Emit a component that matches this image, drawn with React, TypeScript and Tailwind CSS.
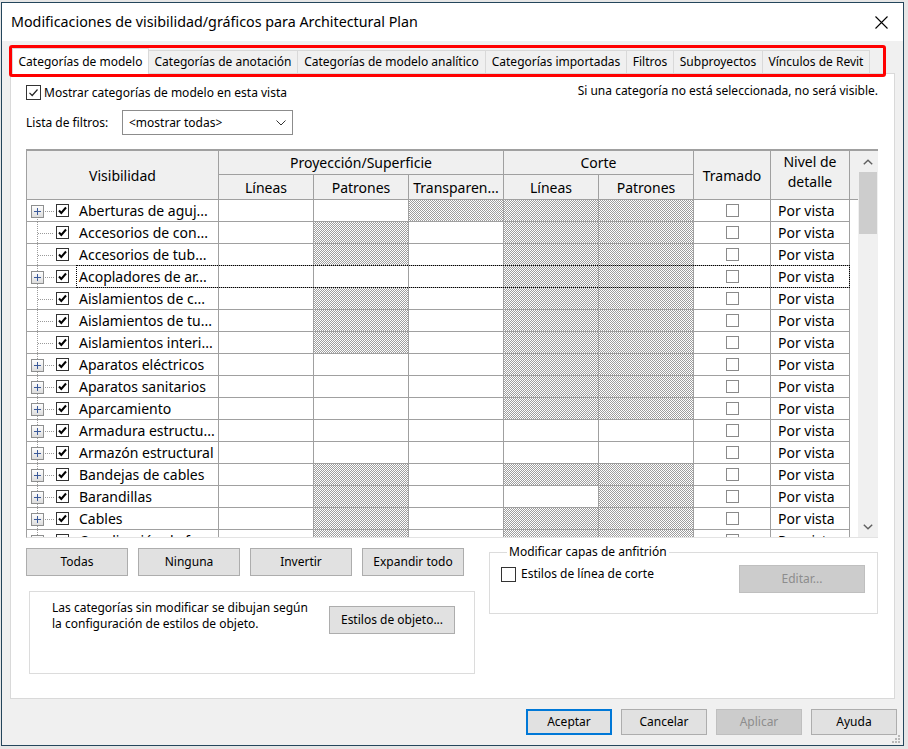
import React from "react";

const F = "font-['Noto_Sans',sans-serif]";
const HATCH =
  "bg-[repeating-conic-gradient(#9e9e9e_0%_25%,#ffffff_0%_50%)] bg-[length:2px_2px]";

type Row = {
  name: string;
  exp: boolean;
  p1: boolean;
  t: boolean;
  l2: boolean;
  p2: boolean;
  focus?: boolean;
};

const rows: Row[] = [
  { name: "Aberturas de aguj...", exp: true, p1: false, t: true, l2: true, p2: true },
  { name: "Accesorios de con...", exp: false, p1: true, t: false, l2: true, p2: true },
  { name: "Accesorios de tub...", exp: false, p1: true, t: false, l2: true, p2: true },
  { name: "Acopladores de ar...", exp: true, p1: false, t: false, l2: true, p2: true, focus: true },
  { name: "Aislamientos de c...", exp: false, p1: true, t: false, l2: true, p2: true },
  { name: "Aislamientos de tu...", exp: false, p1: true, t: false, l2: true, p2: true },
  { name: "Aislamientos interi...", exp: false, p1: true, t: false, l2: true, p2: true },
  { name: "Aparatos eléctricos", exp: true, p1: false, t: false, l2: true, p2: true },
  { name: "Aparatos sanitarios", exp: true, p1: false, t: false, l2: true, p2: true },
  { name: "Aparcamiento", exp: true, p1: false, t: false, l2: true, p2: true },
  { name: "Armadura estructu...", exp: true, p1: false, t: false, l2: false, p2: false },
  { name: "Armazón estructural", exp: true, p1: false, t: false, l2: false, p2: false },
  { name: "Bandejas de cables", exp: true, p1: true, t: false, l2: true, p2: true },
  { name: "Barandillas", exp: true, p1: true, t: false, l2: false, p2: true },
  { name: "Cables", exp: true, p1: true, t: false, l2: true, p2: true },
  { name: "Canalización de f...", exp: true, p1: true, t: false, l2: true, p2: true },
];

function TreeGlyph({ exp, first }: { exp: boolean; first: boolean }) {
  return (
    <svg width="29" height="22" viewBox="0 0 29 22" className="shrink-0">
      <defs>
        <linearGradient id="expg" x1="0" y1="0" x2="0" y2="1">
          <stop offset="0" stopColor="#ffffff" />
          <stop offset="1" stopColor="#dcdcdc" />
        </linearGradient>
      </defs>
      <line
        x1="10.5"
        y1={first ? 11 : 0}
        x2="10.5"
        y2="22"
        stroke="#9a9a9a"
        strokeDasharray="1 1"
      />
      <line x1={exp ? 16 : 11} y1="11.5" x2="27" y2="11.5" stroke="#9a9a9a" strokeDasharray="1 1" />
      {exp && (
        <g>
          <rect x="4.5" y="5.5" width="12" height="12" fill="url(#expg)" stroke="#8e8f8f" />
          <line x1="7" y1="11.5" x2="14" y2="11.5" stroke="#3b5a9a" strokeWidth="1" />
          <line x1="10.5" y1="8" x2="10.5" y2="15" stroke="#3b5a9a" strokeWidth="1" />
        </g>
      )}
    </svg>
  );
}

function BoldCheck() {
  return (
    <div className="w-[13px] h-[13px] border border-[#333] bg-white shrink-0 flex items-center justify-center">
      <svg width="11" height="11" viewBox="0 0 11 11">
        <path d="M2 5.5 L4.3 8 L9 2.5" fill="none" stroke="#000" strokeWidth="2" />
      </svg>
    </div>
  );
}

function Cell({ w, hatch, children, cls = "" }: { w: string; hatch?: boolean; children?: React.ReactNode; cls?: string }) {
  return (
    <div className={`${w} h-full shrink-0 border-r border-b border-[#a0a0a0] ${hatch ? HATCH : "bg-white"} ${cls}`}>
      {children}
    </div>
  );
}

function DataRow({ r, i }: { r: Row; i: number }) {
  return (
    <div className="relative flex h-[22px] text-[14px] text-black">
      <Cell w="w-[192px]" cls="flex items-center">
        <TreeGlyph exp={r.exp} first={i === 0} />
        <BoldCheck />
        <span className="ml-[10px] whitespace-nowrap leading-none">{r.name}</span>
      </Cell>
      <Cell w="w-[95px]" />
      <Cell w="w-[95px]" hatch={r.p1} />
      <Cell w="w-[95px]" hatch={r.t} />
      <Cell w="w-[95px]" hatch={r.l2} />
      <Cell w="w-[95px]" hatch={r.p2} />
      <Cell w="w-[77px]" cls="flex items-center justify-center">
        <div className="w-[13px] h-[13px] border border-[#8a8a8a] bg-white" />
      </Cell>
      <Cell w="w-[79px]" cls="flex items-center pl-[7px]">
        <span className="whitespace-nowrap leading-none">Por vista</span>
      </Cell>
      <div className="flex-1 bg-white" />
      {r.focus && (
        <div className="absolute top-[-1px] left-[49px] w-[774px] h-[23px] border border-dotted border-black pointer-events-none" />
      )}
    </div>
  );
}

function Btn({ children, w, cls = "" }: { children: React.ReactNode; w: string; cls?: string }) {
  return (
    <div
      className={`${w} h-[28px] bg-[#e1e1e1] border border-[#adadad] flex items-center justify-center text-[12px] text-black shrink-0 ${cls}`}
    >
      {children}
    </div>
  );
}

const tabs = [
  { t: "Categorías de modelo", w: "w-[137px]" },
  { t: "Categorías de anotación", w: "w-[149px]" },
  { t: "Categorías de modelo analítico", w: "w-[188px]" },
  { t: "Categorías importadas", w: "w-[141px]" },
  { t: "Filtros", w: "w-[47px]" },
  { t: "Subproyectos", w: "w-[89px]" },
  { t: "Vínculos de Revit", w: "w-[107px]" },
];

export default function App() {
  return (
    <div className={`${F} w-[908px] h-[749px] bg-[#e6e6e6] overflow-hidden pl-[1px] pt-[2px]`}>
      <div className="relative w-[903px] h-[744px] border border-[#24465c] bg-[#f0f0f0] flex flex-col">
        {/* title bar */}
        <div className="h-[38px] bg-white flex items-center justify-between pl-[9px] pr-[15px] shrink-0">
          <span className="text-[14.3px] text-black whitespace-nowrap">
            Modificaciones de visibilidad/gráficos para Architectural Plan
          </span>
          <svg width="13" height="13" viewBox="0 0 13 13">
            <path d="M0.5 0.5L12.5 12.5M12.5 0.5L0.5 12.5" stroke="#000" strokeWidth="1.1" />
          </svg>
        </div>

        {/* body */}
        <div className="flex flex-col px-[8px] pt-[7px]">
          {/* tabs */}
          <div className="flex items-end h-[25px] pl-[2px] relative z-10">
            {tabs.map((tb, i) =>
              i === 0 ? (
                <div
                  key={tb.t}
                  className={`${tb.w} h-[26px] mb-[-1px] bg-white border-l border-t border-r border-[#d9d9d9] flex items-center justify-center text-[12px] text-black whitespace-nowrap`}
                >
                  {tb.t}
                </div>
              ) : (
                <div
                  key={tb.t}
                  className={`${tb.w} h-[23px] bg-[#f0f0f0] border-t border-r border-[#d9d9d9] flex items-center justify-center text-[12px] text-black whitespace-nowrap`}
                >
                  {tb.t}
                </div>
              )
            )}
          </div>

          {/* panel */}
          <div className="h-[626px] bg-white border border-[#d9d9d9] pl-[15px] pr-[16px] flex flex-col">
            {/* checkbox row */}
            <div className="mt-[11px] h-[15px] flex items-center justify-between text-[12px] text-black">
              <div className="flex items-center">
                <div className="w-[15px] h-[15px] border border-[#333] bg-white flex items-center justify-center">
                  <svg width="13" height="13" viewBox="0 0 13 13">
                    <path d="M2.5 6.8 L5.2 9.5 L10.5 3.5" fill="none" stroke="#222" strokeWidth="1.2" />
                  </svg>
                </div>
                <span className="ml-[3px] whitespace-nowrap">Mostrar categorías de modelo en esta vista</span>
              </div>
              <span className="whitespace-nowrap -mt-[3px]">Si una categoría no está seleccionada, no será visible.</span>
            </div>

            {/* filter row */}
            <div className="mt-[10px] h-[25px] flex items-center text-[12px] text-black">
              <span className="w-[96px] whitespace-nowrap">Lista de filtros:</span>
              <div className="w-[171px] h-[25px] border border-[#8c8c8c] bg-white flex items-center justify-between pl-[6px] pr-[6px]">
                <span>&lt;mostrar todas&gt;</span>
                <svg width="10" height="6" viewBox="0 0 10 6">
                  <path d="M0.5 0.5 L5 5 L9.5 0.5" fill="none" stroke="#333" strokeWidth="1" />
                </svg>
              </div>
            </div>

            {/* table */}
            <div className="mt-[14px] h-[389px] w-[852px] flex border-l border-t-2 border-[#a0a0a0] border-b border-b-[#e3e3e3]">
              <div className="flex-1 overflow-hidden flex flex-col">
                {/* header */}
                <div className="flex h-[49px] shrink-0 bg-[#f0f0f0] text-[14px] text-black">
                  <div className="w-[192px] shrink-0 border-r border-b border-[#a0a0a0] flex items-center justify-center">
                    Visibilidad
                  </div>
                  <div className="w-[285px] shrink-0 border-r border-b border-[#a0a0a0] flex flex-col">
                    <div className="h-[24px] border-b border-[#a0a0a0] flex items-center justify-center">
                      Proyección/Superficie
                    </div>
                    <div className="flex-1 flex">
                      <div className="w-[95px] border-r border-[#a0a0a0] flex items-center justify-center">Líneas</div>
                      <div className="w-[95px] border-r border-[#a0a0a0] flex items-center justify-center">Patrones</div>
                      <div className="flex-1 flex items-center justify-center whitespace-nowrap">Transparen...</div>
                    </div>
                  </div>
                  <div className="w-[190px] shrink-0 border-r border-b border-[#a0a0a0] flex flex-col">
                    <div className="h-[24px] border-b border-[#a0a0a0] flex items-center justify-center">Corte</div>
                    <div className="flex-1 flex">
                      <div className="w-[95px] border-r border-[#a0a0a0] flex items-center justify-center">Líneas</div>
                      <div className="flex-1 flex items-center justify-center">Patrones</div>
                    </div>
                  </div>
                  <div className="w-[77px] shrink-0 border-r border-b border-[#a0a0a0] flex items-center justify-center">
                    Tramado
                  </div>
                  <div className="w-[79px] shrink-0 border-r border-b border-[#a0a0a0] flex items-start justify-center text-center leading-[20px] pt-[1px]">
                    Nivel de
                    <br />
                    detalle
                  </div>
                  <div className="flex-1 border-b border-[#a0a0a0]" />
                </div>
                {/* rows */}
                {rows.map((r, i) => (
                  <DataRow key={r.name} r={r} i={i} />
                ))}
              </div>
              {/* scrollbar */}
              <div className="w-[20px] shrink-0 bg-[#f0f0f0] flex flex-col items-center">
                <div className="h-[21px] w-full flex items-center justify-center">
                  <svg width="10" height="6" viewBox="0 0 10 6">
                    <path d="M0.8 5.3 L5 1.2 L9.2 5.3" fill="none" stroke="#606060" strokeWidth="1.4" />
                  </svg>
                </div>
                <div className="w-[18px] h-[62px] bg-[#cdcdcd]" />
                <div className="flex-1" />
                <div className="h-[20px] w-full flex items-center justify-center">
                  <svg width="10" height="6" viewBox="0 0 10 6">
                    <path d="M0.8 0.7 L5 4.8 L9.2 0.7" fill="none" stroke="#606060" strokeWidth="1.4" />
                  </svg>
                </div>
              </div>
            </div>

            {/* bottom section */}
            <div className="mt-[6px] flex">
              <div className="w-[449px] shrink-0 flex flex-col pt-[4px]">
                <div className="flex gap-[10px]">
                  <Btn w="w-[102px]">Todas</Btn>
                  <Btn w="w-[102px]">Ninguna</Btn>
                  <Btn w="w-[102px]">Invertir</Btn>
                  <Btn w="w-[102px]">Expandir todo</Btn>
                </div>
                <div className="ml-[3px] mt-[15px] w-[446px] h-[83px] border border-[#dcdcdc] flex items-start justify-between pl-[22px] pr-[19px] pt-[8px]">
                  <div className="text-[12px] leading-[16px] text-black whitespace-nowrap">
                    Las categorías sin modificar se dibujan según
                    <br />
                    la configuración de estilos de objeto.
                  </div>
                  <Btn w="w-[126px]" cls="h-[27px] mt-[6px]">
                    Estilos de objeto...
                  </Btn>
                </div>
              </div>
              <fieldset className="ml-[14px] w-[390px] h-[70px] border border-[#dcdcdc] pl-[11px] pr-[12px] flex">
                <legend className="text-[12px] text-black ml-[6px] px-[2px] leading-[16px]">
                  Modificar capas de anfitrión
                </legend>
                <div className="w-full flex items-start justify-between mt-[5px]">
                  <div className="flex items-center text-[12px] text-black">
                    <div className="w-[15px] h-[15px] border border-[#333] bg-white" />
                    <span className="ml-[5px] whitespace-nowrap">Estilos de línea de corte</span>
                  </div>
                  <div className="w-[126px] h-[28px] bg-[#cccccc] border border-[#bfbfbf] flex items-center justify-center text-[12px] text-[#8d8d8d]">
                    Editar...
                  </div>
                </div>
              </fieldset>
            </div>
          </div>

          {/* dialog buttons */}
          <div className="mt-[10px] -mr-[2px] flex justify-end gap-[9px]">
            <div className="w-[86px] h-[26px] bg-[#e1e1e1] border-2 border-[#0078d7] flex items-center justify-center text-[12px] text-black">
              Aceptar
            </div>
            <div className="w-[86px] h-[26px] bg-[#e1e1e1] border border-[#adadad] flex items-center justify-center text-[12px] text-black">
              Cancelar
            </div>
            <div className="w-[86px] h-[26px] bg-[#cccccc] border border-[#bfbfbf] flex items-center justify-center text-[12px] text-[#8d8d8d]">
              Aplicar
            </div>
            <div className="w-[86px] h-[26px] bg-[#e1e1e1] border border-[#adadad] flex items-center justify-center text-[12px] text-black">
              Ayuda
            </div>
          </div>
        </div>

        {/* resize grip */}
        <svg className="absolute right-[2px] bottom-[1px]" width="10" height="10" viewBox="0 0 10 10">
          <rect x="7" y="1" width="2" height="2" fill="#b8b8b8" />
          <rect x="4" y="4" width="2" height="2" fill="#b8b8b8" />
          <rect x="7" y="4" width="2" height="2" fill="#b8b8b8" />
          <rect x="1" y="7" width="2" height="2" fill="#b8b8b8" />
          <rect x="4" y="7" width="2" height="2" fill="#b8b8b8" />
          <rect x="7" y="7" width="2" height="2" fill="#b8b8b8" />
        </svg>

        {/* red annotation */}
        <div className="absolute left-[7px] top-[42px] w-[877px] h-[32px] border-[3px] border-[#ff0000] rounded-[3px] pointer-events-none z-20" />
      </div>
    </div>
  );
}
